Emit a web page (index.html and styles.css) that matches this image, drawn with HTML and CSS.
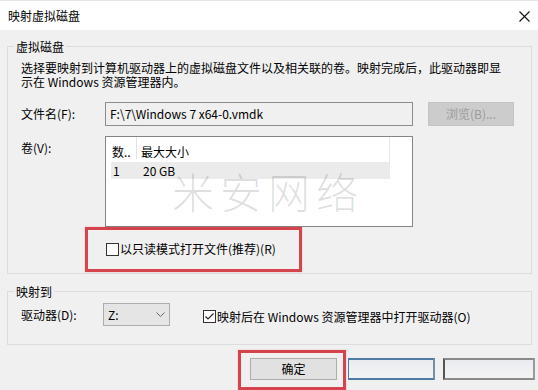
FILE: index.html
```html
<!DOCTYPE html>
<html lang="zh-CN">
<head>
<meta charset="utf-8">
<title>映射虚拟磁盘</title>
<link rel="stylesheet" href="styles.css">
</head>
<body>
<div class="window">
  <div class="titlebar">
    <span class="title">映射虚拟磁盘</span>
    <svg class="close" width="11" height="11" viewBox="0 0 11 11"><path d="M0.5 0.5L10.5 10.5M10.5 0.5L0.5 10.5" stroke="#111" stroke-width="1.1" fill="none"/></svg>
  </div>

  <fieldset class="group g1">
    <legend>虚拟磁盘</legend>
    <div class="gbody">
      <p class="desc"><span class="line">选择要映射到计算机驱动器上的虚拟磁盘文件以及相关联的卷。映射完成后，此驱动器即显</span><span class="line">示在 Windows 资源管理器内。</span></p>
      <div class="row file-row">
        <span class="lbl">文件名(F):</span>
        <div class="edit">F:\7\Windows 7 x64-0.vmdk</div>
        <button class="btn btn-disabled" type="button">浏览(B)...</button>
      </div>
      <div class="row vol-row">
        <span class="lbl">卷(V):</span>
        <div class="listview">
          <div class="lv-head"><span class="c1">数..</span><span class="c2">最大大小</span></div>
          <div class="lv-row"><span class="c1">1</span><span class="c2">20 GB</span></div>
        </div>
      </div>
      <div class="check-row ro-row"><span class="cb"></span><span class="cb-label">以只读模式打开文件(推荐)(R)</span></div>
    </div>
  </fieldset>

  <fieldset class="group g2">
    <legend>映射到</legend>
    <div class="gbody">
      <div class="row drive-row">
        <span class="lbl">驱动器(D):</span>
        <div class="combo"><span>Z:</span>
          <svg class="chev" width="9" height="5" viewBox="0 0 9 5"><path d="M0.5 0.5L4.5 4.5L8.5 0.5" stroke="#666" stroke-width="1" fill="none"/></svg>
        </div>
        <div class="check-row open-row"><span class="cb checked"><svg width="11" height="11" viewBox="0 0 11 11"><path d="M1.5 5.5L4 8L9.5 2.5" stroke="#222" stroke-width="1.1" fill="none"/></svg></span><span class="cb-label">映射后在 Windows 资源管理器中打开驱动器(O)</span></div>
      </div>
    </div>
  </fieldset>

  <div class="buttons">
    <button class="btn btn-ok" type="button">确定</button>
    <button class="btn btn-blur btn-blue" type="button"></button>
    <button class="btn btn-blur btn-gray" type="button"></button>
  </div>

  <div class="watermark">米安网络</div>
  <div class="mark mark-ro"></div>
  <div class="mark mark-ok"></div>
</div>
</body>
</html>
```

FILE: styles.css
```css
* { box-sizing: border-box; }

html, body {
  margin: 0;
  padding: 0;
  background: #f0f0f0;
}

body {
  font-family: "Noto Sans CJK SC", "Noto Sans", sans-serif;
  font-size: 12px;
  line-height: 14px;
  color: #000;
}

.window {
  position: relative;
  width: 538px;
  height: 390px;
  background: #f0f0f0;
  overflow: hidden;
}

.titlebar {
  height: 30px;
  background: #fff;
  display: flex;
  align-items: center;
  justify-content: space-between;
  padding: 0 8px 0 8px;
  border-top: 1px solid #e6e6e6;
}

.title { line-height: 14px; }

.close { display: block; margin-top: 1px; }

.group {
  margin: 8px 6px 0 7px;
  padding: 0;
  border: 1px solid #dcdcdc;
  min-width: 0;
}

.group legend {
  margin-left: 6px;
  padding: 0 2px;
  line-height: 17px;
}

.g1 .gbody { padding: 6px 0 17px 13px; }

.g2 { margin-top: 9px; }
.g2 .gbody { padding: 3px 0 18px 13px; }

.desc {
  margin: 0;
  line-height: 14px;
}

.desc .line {
  display: block;
  height: 14px;
  line-height: 14px;
  white-space: nowrap;
}

.row {
  display: flex;
  align-items: center;
}

.lbl {
  flex: none;
  width: 84px;
}

.file-row { margin-top: 13px; height: 24px; }

.edit {
  width: 308px;
  height: 24px;
  border: 1px solid #8c8c8c;
  background: #f0f0f0;
  padding-left: 4px;
  line-height: 22px;
  white-space: nowrap;
}

.btn {
  font: inherit;
  margin: 0;
  padding: 0;
  line-height: 14px;
  cursor: default;
}

.btn-disabled {
  width: 86px;
  height: 24px;
  margin-left: 15px;
  background: #cccccc;
  border: 1px solid #c4c4c4;
  color: #9c9c9c;
}

.vol-row {
  margin-top: 10px;
  align-items: flex-start;
}

.vol-row .lbl { margin-top: 5px; }

.listview {
  width: 308px;
  height: 91px;
  border: 1px solid #858585;
  background: #fff;
  padding-left: 5px;
}

.lv-head, .lv-row {
  display: flex;
  width: 279px;
}

.lv-head {
  height: 25px;
  padding-top: 8px;
  border-right: 1px solid #e6e6e6;
}

.lv-head .c1 {
  width: 26px;
  padding-left: 1px;
  border-right: 1px solid #e3e3e3;
  margin-top: -8px;
  padding-top: 8px;
  height: 22px;
}

.lv-head .c2 { padding-left: 4px; }

.lv-row {
  height: 17px;
  line-height: 17px;
  background: #ebebeb;
}

.lv-row .c1 { width: 27px; padding-left: 2px; }
.lv-row .c2 { padding-left: 5px; }

.check-row {
  display: flex;
  align-items: center;
}

.ro-row {
  margin-top: 15px;
  margin-left: 85px;
  height: 14px;
}

.cb {
  flex: none;
  width: 13px;
  height: 13px;
  border: 1px solid #333;
  background: #fff;
  margin-right: 1px;
  display: flex;
  align-items: center;
  justify-content: center;
}

.cb svg { display: block; }

.drive-row { height: 23px; }

.drive-row .lbl { width: 82px; }

.combo {
  width: 67px;
  height: 23px;
  border: 1px solid #adadad;
  background: #e5e5e5;
  display: flex;
  align-items: center;
  justify-content: space-between;
  padding: 0 4px 0 4px;
}

.chev { display: block; }

.open-row {
  margin-left: 33px;
  margin-top: 4px;
}

.buttons {
  display: flex;
  margin: 13px 0 0 250px;
}

.btn-ok {
  width: 87px;
  height: 22px;
  background: #e1e1e1;
  border: 1px solid #adadad;
  color: #000;
}

.btn-blur {
  height: 22px;
  background: linear-gradient(#e9ecef, #f2f3f4);
}

.btn-blue {
  width: 87px;
  margin-left: 11px;
  border: 2px solid #4f7aa3;
  border-left-width: 1px;
  border-right-color: #7a8ea3;
}

.btn-gray {
  width: 92px;
  margin-left: 8px;
  border: 2px solid #8a8a8a;
  border-left: 2px solid #555;
  border-right-color: #9a9a9a;
}

.watermark {
  position: absolute;
  left: 172px;
  top: 168px;
  font-size: 42px;
  line-height: 46px;
  letter-spacing: 6px;
  font-weight: 300;
  color: rgba(0, 0, 0, 0.13);
  white-space: nowrap;
  pointer-events: none;
}

.mark {
  position: absolute;
  border: 3px solid #d5444c;
  box-shadow: 0 0 1px rgba(213, 68, 76, 0.5);
}

.mark-ro {
  left: 85px;
  top: 227px;
  width: 217px;
  height: 45px;
}

.mark-ok {
  left: 238px;
  top: 350px;
  width: 108px;
  height: 40px;
}
```
